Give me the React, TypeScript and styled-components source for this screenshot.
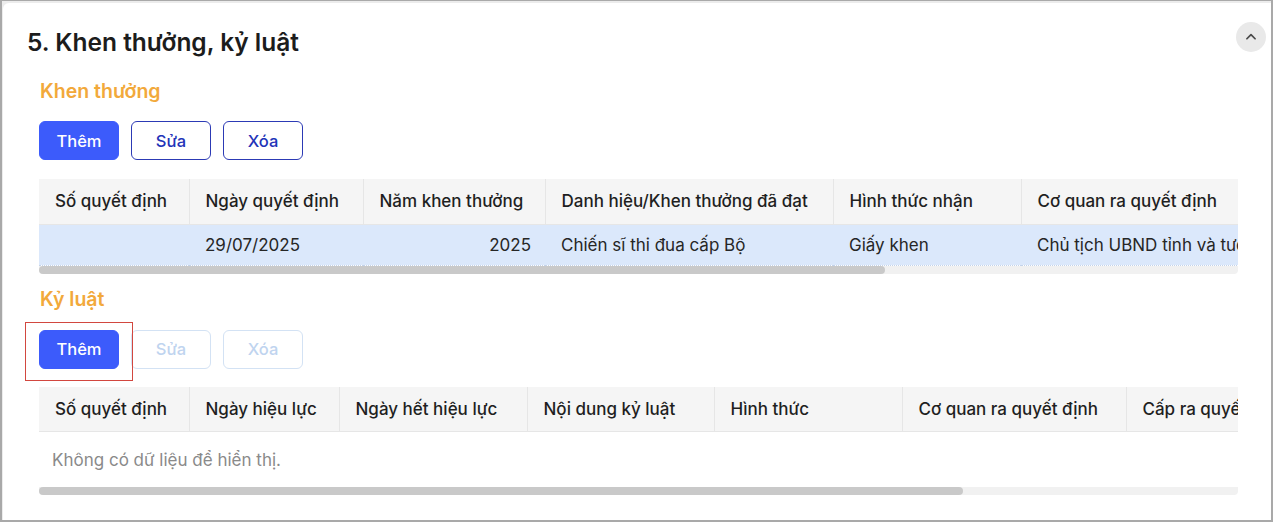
import React from "react";
import styled, { createGlobalStyle, css } from "styled-components";

const GlobalStyle = createGlobalStyle`
  html, body {
    margin: 0;
    padding: 0;
    background: #ffffff;
  }
  body {
    font-family: Inter, "Noto Sans", "Liberation Sans", sans-serif;
    color: #1f1f1f;
  }
  * {
    box-sizing: border-box;
  }
`;

const Frame = styled.div`
  height: 522px;
  border: 2px solid #a9a9a9;
  border-top-width: 1px;
  background: #ececec;
  padding-top: 2px;
  padding-left: 1px;
`;

const Card = styled.div`
  height: 100%;
  background: #ffffff;
  border-top-left-radius: 6px;
  padding: 19px 5px 0 24px;
`;

const Header = styled.div`
  display: flex;
  justify-content: space-between;
  align-items: flex-start;
`;

const Title = styled.h2`
  margin: 5px 0 0;
  font-size: 24.5px;
  line-height: 30px;
  font-weight: 600;
  color: #1c1c1c;
`;

const CollapseButton = styled.button`
  width: 30px;
  height: 30px;
  border: none;
  border-radius: 50%;
  background: #e9e9e9;
  display: flex;
  align-items: center;
  justify-content: center;
  padding: 0;
  color: #4a4a4a;
`;

const Section = styled.section`
  margin: 0 28px 0 12px;
`;

const SectionTitle = styled.h3<{ $top: number }>`
  margin: ${(p) => p.$top}px 0 0 1px;
  font-size: 19.5px;
  line-height: 24px;
  font-weight: 600;
  color: #f2a93b;
`;

const Toolbar = styled.div<{ $top: number }>`
  display: flex;
  gap: 12px;
  margin-top: ${(p) => p.$top}px;
`;

const Highlight = styled.span`
  position: relative;
  display: inline-flex;
  &::after {
    content: "";
    position: absolute;
    inset: -8px -14px -12px -14px;
    border: 1.5px solid #d2473f;
    pointer-events: none;
  }
`;

const ActionButton = styled.button<{ $variant: "primary" | "outline" | "disabled" }>`
  width: 80px;
  height: 39px;
  border-radius: 6px;
  font-family: inherit;
  font-size: 16.5px;
  font-weight: 500;
  padding: 0;
  cursor: pointer;
  ${(p) =>
    p.$variant === "primary"
      ? css`
          background: #3c5bfb;
          border: 1px solid #3c5bfb;
          color: #ffffff;
        `
      : p.$variant === "outline"
      ? css`
          background: #ffffff;
          border: 1px solid #2c3ab5;
          color: #2233b8;
        `
      : css`
          background: #ffffff;
          border: 1px solid #d3e2f4;
          color: #bfd4ef;
          cursor: not-allowed;
        `}
`;

const TableWrap = styled.div<{ $top: number }>`
  margin-top: ${(p) => p.$top}px;
  overflow: hidden;
`;

const Table = styled.table<{ $width: number }>`
  width: ${(p) => p.$width}px;
  border-collapse: collapse;
  table-layout: fixed;
  white-space: nowrap;
  font-size: 17px;
`;

const Th = styled.th<{ $w: number }>`
  width: ${(p) => p.$w}px;
  height: 45px;
  padding: 0 16px;
  text-align: left;
  font-weight: 500;
  color: #1f1f1f;
  background: #f5f5f5;
  border-right: 1px solid #e6e6e6;
  border-bottom: 1px solid #e6e6e6;
  overflow: hidden;
`;

const SelectedRow = styled.tr`
  background: #dbe8fb;
`;

const Td = styled.td<{ $right?: boolean }>`
  height: 41px;
  padding: 0 ${(p) => (p.$right ? "14px" : "16px")} 0 16px;
  text-align: ${(p) => (p.$right ? "right" : "left")};
  color: #262626;
  overflow: hidden;
  border-bottom: 1px dotted #c4d3ea;
`;

const EmptyRow = styled.div`
  height: 55px;
  display: flex;
  align-items: center;
  padding-left: 13px;
  font-size: 17px;
  color: #8a8a8a;
`;

const ScrollTrack = styled.div`
  height: 8px;
  background: #f1f1f1;
  border-radius: 0 0 4px 4px;
`;

const ScrollThumb = styled.div<{ $w: number }>`
  width: ${(p) => p.$w}px;
  height: 100%;
  background: #c9c9c9;
  border-radius: 4px;
`;

const rewardCols = [
  { label: "Số quyết định", w: 150 },
  { label: "Ngày quyết định", w: 174 },
  { label: "Năm khen thưởng", w: 182 },
  { label: "Danh hiệu/Khen thưởng đã đạt", w: 288 },
  { label: "Hình thức nhận", w: 188 },
  { label: "Cơ quan ra quyết định", w: 300 },
];

const disciplineCols = [
  { label: "Số quyết định", w: 150 },
  { label: "Ngày hiệu lực", w: 150 },
  { label: "Ngày hết hiệu lực", w: 188 },
  { label: "Nội dung kỷ luật", w: 187 },
  { label: "Hình thức", w: 188 },
  { label: "Cơ quan ra quyết định", w: 224 },
  { label: "Cấp ra quyết định", w: 200 },
];

const totalWidth = (cols: { w: number }[]) => cols.reduce((s, c) => s + c.w, 0);

const ChevronUp = () => (
  <svg width="14" height="14" viewBox="0 0 24 24" fill="none" stroke="currentColor" strokeWidth="3" strokeLinecap="round" strokeLinejoin="round">
    <path d="M5 15l7-7 7 7" />
  </svg>
);

const App: React.FC = () => {
  return (
    <>
      <GlobalStyle />
      <Frame>
        <Card>
          <Header>
            <Title>5. Khen thưởng, kỷ luật</Title>
            <CollapseButton aria-label="Thu gọn">
              <ChevronUp />
            </CollapseButton>
          </Header>

          <Section>
            <SectionTitle $top={22}>Khen thưởng</SectionTitle>
            <Toolbar $top={18}>
              <ActionButton $variant="primary">Thêm</ActionButton>
              <ActionButton $variant="outline">Sửa</ActionButton>
              <ActionButton $variant="outline">Xóa</ActionButton>
            </Toolbar>
            <TableWrap $top={19}>
              <Table $width={totalWidth(rewardCols)}>
                <thead>
                  <tr>
                    {rewardCols.map((c) => (
                      <Th key={c.label} $w={c.w}>
                        {c.label}
                      </Th>
                    ))}
                  </tr>
                </thead>
                <tbody>
                  <SelectedRow>
                    <Td></Td>
                    <Td>29/07/2025</Td>
                    <Td $right>2025</Td>
                    <Td>Chiến sĩ thi đua cấp Bộ</Td>
                    <Td>Giấy khen</Td>
                    <Td>Chủ tịch UBND tỉnh và tương đương</Td>
                  </SelectedRow>
                </tbody>
              </Table>
              <ScrollTrack>
                <ScrollThumb $w={846} />
              </ScrollTrack>
            </TableWrap>
          </Section>

          <Section>
            <SectionTitle $top={13}>Kỷ luật</SectionTitle>
            <Toolbar $top={19}>
              <Highlight>
                <ActionButton $variant="primary">Thêm</ActionButton>
              </Highlight>
              <ActionButton $variant="disabled" disabled>
                Sửa
              </ActionButton>
              <ActionButton $variant="disabled" disabled>
                Xóa
              </ActionButton>
            </Toolbar>
            <TableWrap $top={18}>
              <Table $width={totalWidth(disciplineCols)}>
                <thead>
                  <tr>
                    {disciplineCols.map((c) => (
                      <Th key={c.label} $w={c.w}>
                        {c.label}
                      </Th>
                    ))}
                  </tr>
                </thead>
              </Table>
              <EmptyRow>Không có dữ liệu để hiển thị.</EmptyRow>
              <ScrollTrack>
                <ScrollThumb $w={924} />
              </ScrollTrack>
            </TableWrap>
          </Section>
        </Card>
      </Frame>
    </>
  );
};

export default App;
